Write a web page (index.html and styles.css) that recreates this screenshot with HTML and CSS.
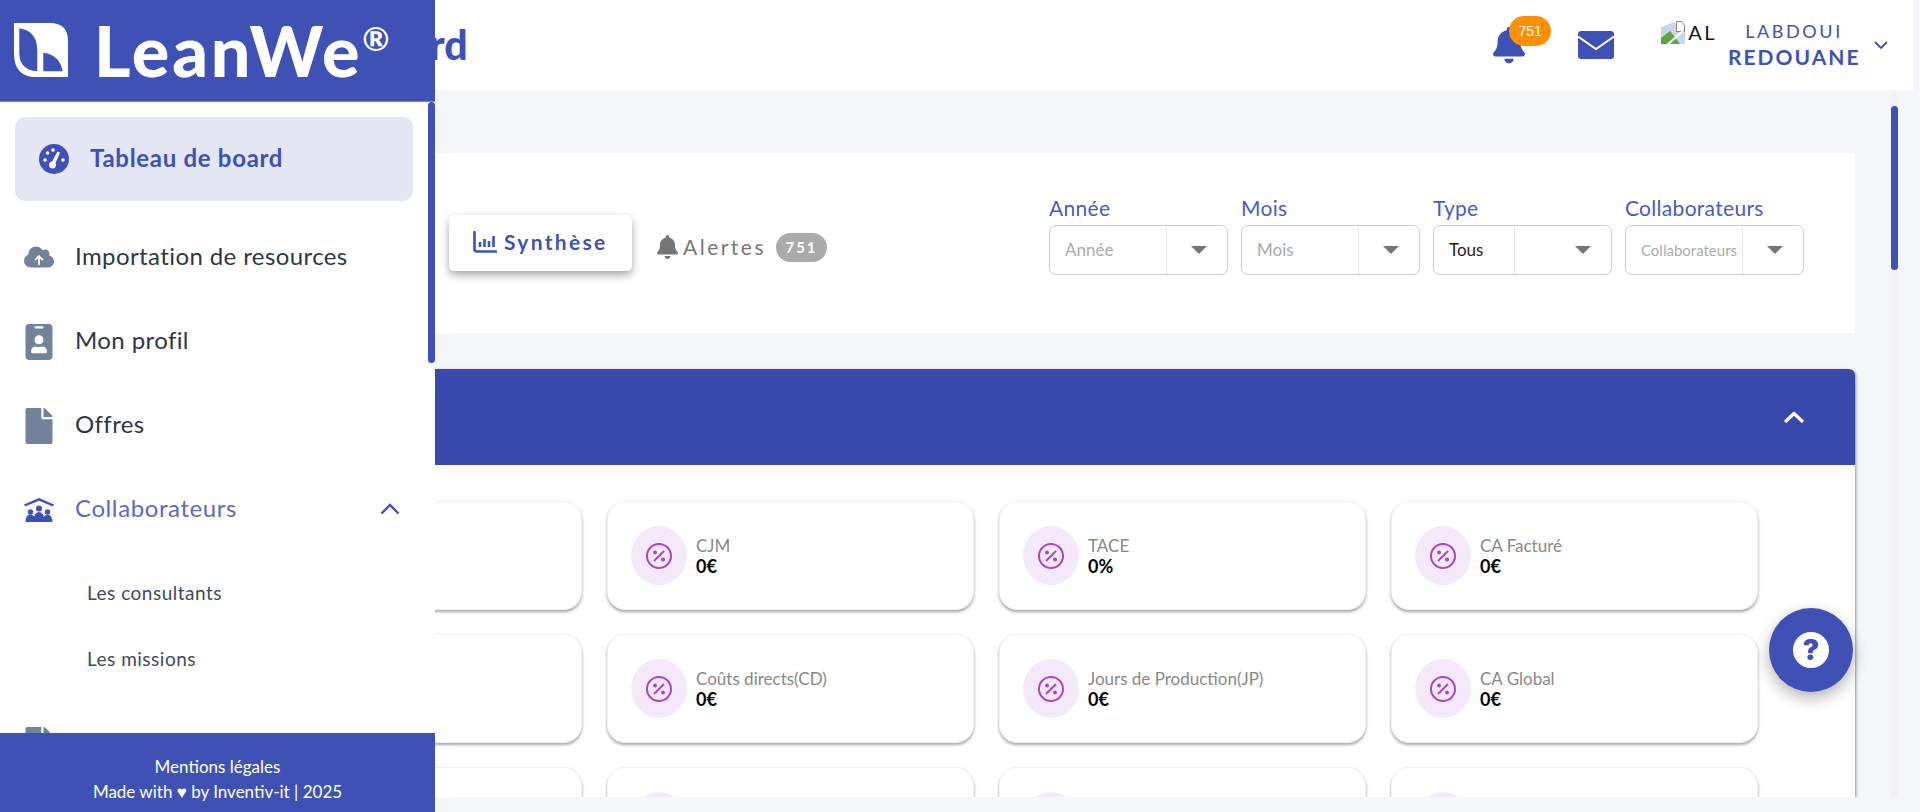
FILE: index.html
```html
<!DOCTYPE html>
<html lang="fr">
<head>
<meta charset="utf-8">
<title>LeanWe - Tableau de board</title>
<link rel="stylesheet" href="styles.css">
</head>
<body>
<div class="app">
  <aside class="sidebar">
    <div class="brand">
      <svg class="brand-mark" viewBox="0 0 54 54"><path fill="#fff" fill-rule="evenodd" d="M0 0H36Q54 0 54 18V54H22Q0 54 0 30ZM5.300 5.300V30Q5.500 47 23.300 48.300V27Q23 8 5.300 5.300ZM29.300 29.700V48.300H48.700Q46 32 29.300 29.700Z"/></svg>
      <span class="brand-name">LeanWe<sup class="brand-reg">®</sup></span>
    </div>
    <div class="nav-wrap">
      <nav class="nav">
        <a class="nav-active">
          <svg class="ico" viewBox="0 0 30 30"><circle cx="15" cy="15" r="15" fill="#3f51b5"/><g fill="#fff"><circle cx="6" cy="16" r="1.800"/><circle cx="8.500" cy="9" r="1.800"/><circle cx="14" cy="6" r="1.800"/><circle cx="24" cy="16" r="1.800"/><circle cx="13.500" cy="21" r="3.400"/><path d="M12 19.500L18.500 7.500 21 8.500 15.500 21.500Z"/></g></svg>
          <span class="nav-text">Tableau de board</span>
        </a>
        <a class="nav-item">
          <svg class="ico ico-cloud" viewBox="0 0 640 512"><path fill="#718299" d="M537.600 226.600c4.100-10.700 6.400-22.400 6.400-34.600 0-53-43-96-96-96-19.700 0-38.100 6-53.300 16.200C367 64.200 315.300 32 256 32c-88.400 0-160 71.600-160 160 0 2.700.1 5.400.2 8.100C40.200 219.800 0 273.200 0 336c0 79.500 64.500 144 144 144h368c70.700 0 128-57.300 128-128 0-61.900-44-113.600-102.400-125.400z"/><path fill="none" stroke="#fff" stroke-width="38" stroke-linecap="round" stroke-linejoin="round" d="M320 410V240M245 310l75-75 75 75"/></svg>
          <span class="nav-text">Importation de resources</span>
        </a>
        <a class="nav-item">
          <svg class="ico" viewBox="-21.300 0 426.700 512"><path fill="#718299" d="M336 0H48C21.500 0 0 21.500 0 48v416c0 26.500 21.500 48 48 48h288c26.500 0 48-21.500 48-48V48c0-26.500-21.500-48-48-48zM144 32h96c8.800 0 16 7.200 16 16s-7.200 16-16 16h-96c-8.800 0-16-7.200-16-16s7.200-16 16-16zm48 128c35.300 0 64 28.700 64 64s-28.700 64-64 64-64-28.700-64-64 28.700-64 64-64zm112 236.800c0 10.600-10 19.200-22.400 19.200H102.400C90 416 80 407.400 80 396.800v-19.200c0-31.800 30.100-57.600 67.200-57.600h5c12.300 5.100 25.700 8 39.800 8s27.600-2.900 39.800-8h5c37.100 0 67.200 25.800 67.200 57.600v19.200z"/></svg>
          <span class="nav-text">Mon profil</span>
        </a>
        <a class="nav-item">
          <svg class="ico" viewBox="-21.300 0 426.700 512"><path fill="#718299" d="M224 136V0H24C10.700 0 0 10.700 0 24v464c0 13.300 10.700 24 24 24h336c13.300 0 24-10.700 24-24V160H248c-13.200 0-24-10.800-24-24zm160-14.100v6.100H256V0h6.100c6.400 0 12.500 2.500 17 7l97.900 98c4.500 4.500 7 10.600 7 16.900z"/></svg>
          <span class="nav-text">Offres</span>
        </a>
        <a class="nav-item nav-open">
          <svg class="ico" viewBox="0 0 30 24"><g fill="#3f51b5"><path d="M15 0L30 6.500 29 8.500 15 2.800 1 8.500 0 6.500Z"/><circle cx="15" cy="10.500" r="3"/><path d="M9.500 24q0-10 5.500-10t5.500 10Z"/><circle cx="6.500" cy="14" r="2.700"/><path d="M1.500 24q0-7.500 5-7.500T11 24Z"/><circle cx="23.500" cy="14" r="2.700"/><path d="M19 24q0-7.500 4.500-7.500T28.500 24Z"/></g></svg>
          <span class="nav-text nav-grow">Collaborateurs</span>
          <svg class="nav-chevron" viewBox="0 0 20 12"><path fill="none" stroke="#3f51b5" stroke-width="2.400" d="M1.500 10.500L10 2l8.500 8.500"/></svg>
        </a>
        <div class="subnav">
          <a class="sub-item">Les consultants</a>
          <a class="sub-item">Les missions</a>
        </div>
        <a class="nav-item nav-last">
          <svg class="ico" viewBox="-21.300 0 426.700 512"><path fill="#718299" d="M224 136V0H24C10.700 0 0 10.700 0 24v464c0 13.300 10.700 24 24 24h336c13.300 0 24-10.700 24-24V160H248c-13.200 0-24-10.800-24-24zm160-14.100v6.100H256V0h6.100c6.400 0 12.500 2.500 17 7l97.900 98c4.500 4.500 7 10.600 7 16.900z"/></svg>
        </a>
      </nav>
      <div class="nav-thumb"></div>
    </div>
    <footer class="side-foot">
      <div>Mentions légales</div>
      <div>Made with ♥ by Inventiv-it | 2025</div>
    </footer>
  </aside>

  <header class="topbar">
    <h1 class="title">Tableau de board</h1>
    <div class="top-right">
      <div class="bell-wrap">
        <svg class="bell" viewBox="0 0 448 512"><path fill="#3f51b5" d="M224 0c-17.700 0-32 14.300-32 32V51.200C119 66 64 130.600 64 208v18.800c0 47-17.300 92.400-48.500 127.600l-7.400 8.300c-8.400 9.400-10.400 22.900-5.300 34.400S19.400 416 32 416H416c12.600 0 24-7.400 29.200-18.900s3.100-25-5.300-34.400l-7.400-8.300C401.300 319.200 384 273.900 384 226.800V208c0-77.400-55-142-128-156.800V32c0-17.700-14.300-32-32-32zm45.300 493.300c12-12 18.700-28.300 18.700-45.300H224 160c0 17 6.700 33.300 18.700 45.300s28.300 18.700 45.300 18.700s33.300-6.700 45.300-18.700z"/></svg>
        <span class="bell-badge">751</span>
      </div>
      <svg class="mail" viewBox="0 0 36 28"><rect width="36" height="28" rx="3" fill="#3f51b5"/><path fill="none" stroke="#fff" stroke-width="2" d="M0 5.500L18 18 36 5.500"/></svg>
      <div class="avatar">
        <svg class="broken" viewBox="0 0 24 23"><path fill="#c8d7e8" d="M0 6L14 1l1 4h9v18H0Z"/><path fill="#5fa33c" d="M0 23v-6l9-7 10 13Z"/><path fill="#fff" d="M15 0l7 0 2 5v5h-9Z"/><path fill="none" stroke="#888" d="M15.500.5h5l3 4v6h-8Z"/><path stroke="#fff" stroke-width="2" d="M6 24L22 10"/></svg>
        <span class="avatar-alt">AL</span>
      </div>
      <div class="user">
        <div class="user-last">LABDOUI</div>
        <div class="user-first">REDOUANE</div>
      </div>
      <svg class="user-chevron" viewBox="0 0 14 8"><path fill="none" stroke="#3f51b5" stroke-width="1.800" d="M1 1l6 6 6-6"/></svg>
    </div>
  </header>

  <div class="body-row">
    <main class="content">
      <section class="filters-card">
        <div class="tabs">
          <span class="tab-arrow">›</span>
          <div class="tab tab-on">
            <svg class="tab-ico" viewBox="0 0 24 22"><path fill="none" stroke="#3f51b5" stroke-width="2.600" stroke-linecap="round" d="M1.500 1v17q0 2.500 2.500 2.500h19"/><path fill="none" stroke="#3f51b5" stroke-width="2.600" d="M7 11v5M11.500 8v8M16 10v6M20.500 5v11"/></svg>
            <span class="tab-text">Synthèse</span>
          </div>
          <div class="tab-plain">
            <svg class="tab-bell" viewBox="0 0 448 512"><path fill="#757575" d="M224 0c-17.700 0-32 14.300-32 32V51.200C119 66 64 130.600 64 208v18.800c0 47-17.300 92.400-48.500 127.600l-7.400 8.300c-8.400 9.400-10.400 22.900-5.300 34.400S19.400 416 32 416H416c12.600 0 24-7.400 29.200-18.900s3.100-25-5.300-34.400l-7.400-8.300C401.300 319.200 384 273.900 384 226.800V208c0-77.400-55-142-128-156.800V32c0-17.700-14.300-32-32-32zm45.300 493.300c12-12 18.700-28.300 18.700-45.300H224 160c0 17 6.700 33.300 18.700 45.300s28.300 18.700 45.300 18.700s33.300-6.700 45.300-18.700z"/></svg>
            <span class="tab-label">Alertes</span>
            <span class="tab-count">751</span>
          </div>
        </div>
        <div class="filters">
          <div class="filter">
            <label class="f-label">Année</label>
            <div class="select"><span class="s-val ph">Année</span><span class="s-arrow"><i class="tri"></i></span></div>
          </div>
          <div class="filter">
            <label class="f-label">Mois</label>
            <div class="select"><span class="s-val ph">Mois</span><span class="s-arrow"><i class="tri"></i></span></div>
          </div>
          <div class="filter">
            <label class="f-label">Type</label>
            <div class="select"><span class="s-val s-short">Tous</span><span class="s-arrow s-wide"><i class="tri"></i></span></div>
          </div>
          <div class="filter">
            <label class="f-label">Collaborateurs</label>
            <div class="select"><span class="s-val ph s-small">Collaborateurs</span><span class="s-arrow"><i class="tri"></i></span></div>
          </div>
        </div>
      </section>

      <section class="panel">
        <div class="panel-head">
          <svg class="panel-chevron" viewBox="0 0 20 12"><path fill="none" stroke="#fff" stroke-width="3.200" stroke-linecap="round" stroke-linejoin="round" d="M2 10l8-7.500 8 7.500"/></svg>
        </div>
        <div class="grid">
          <div class="kpi"></div>
          <div class="kpi"><div class="kpi-ico"><svg viewBox="0 0 26 26"><circle cx="13" cy="13" r="12" fill="none" stroke="#ab47bc" stroke-width="2"/><path stroke="#ab47bc" stroke-width="2" d="M8 18L18 8"/><circle cx="9" cy="9.500" r="2" fill="#ab47bc"/><circle cx="17" cy="16.500" r="2" fill="#ab47bc"/></svg></div><div class="kpi-text"><div class="kpi-label">CJM</div><div class="kpi-val">0€</div></div></div>
          <div class="kpi"><div class="kpi-ico"><svg viewBox="0 0 26 26"><circle cx="13" cy="13" r="12" fill="none" stroke="#ab47bc" stroke-width="2"/><path stroke="#ab47bc" stroke-width="2" d="M8 18L18 8"/><circle cx="9" cy="9.500" r="2" fill="#ab47bc"/><circle cx="17" cy="16.500" r="2" fill="#ab47bc"/></svg></div><div class="kpi-text"><div class="kpi-label">TACE</div><div class="kpi-val">0%</div></div></div>
          <div class="kpi"><div class="kpi-ico"><svg viewBox="0 0 26 26"><circle cx="13" cy="13" r="12" fill="none" stroke="#ab47bc" stroke-width="2"/><path stroke="#ab47bc" stroke-width="2" d="M8 18L18 8"/><circle cx="9" cy="9.500" r="2" fill="#ab47bc"/><circle cx="17" cy="16.500" r="2" fill="#ab47bc"/></svg></div><div class="kpi-text"><div class="kpi-label">CA Facturé</div><div class="kpi-val">0€</div></div></div>
          <div class="kpi"></div>
          <div class="kpi"><div class="kpi-ico"><svg viewBox="0 0 26 26"><circle cx="13" cy="13" r="12" fill="none" stroke="#ab47bc" stroke-width="2"/><path stroke="#ab47bc" stroke-width="2" d="M8 18L18 8"/><circle cx="9" cy="9.500" r="2" fill="#ab47bc"/><circle cx="17" cy="16.500" r="2" fill="#ab47bc"/></svg></div><div class="kpi-text"><div class="kpi-label">Coûts directs(CD)</div><div class="kpi-val">0€</div></div></div>
          <div class="kpi"><div class="kpi-ico"><svg viewBox="0 0 26 26"><circle cx="13" cy="13" r="12" fill="none" stroke="#ab47bc" stroke-width="2"/><path stroke="#ab47bc" stroke-width="2" d="M8 18L18 8"/><circle cx="9" cy="9.500" r="2" fill="#ab47bc"/><circle cx="17" cy="16.500" r="2" fill="#ab47bc"/></svg></div><div class="kpi-text"><div class="kpi-label">Jours de Production(JP)</div><div class="kpi-val">0€</div></div></div>
          <div class="kpi"><div class="kpi-ico"><svg viewBox="0 0 26 26"><circle cx="13" cy="13" r="12" fill="none" stroke="#ab47bc" stroke-width="2"/><path stroke="#ab47bc" stroke-width="2" d="M8 18L18 8"/><circle cx="9" cy="9.500" r="2" fill="#ab47bc"/><circle cx="17" cy="16.500" r="2" fill="#ab47bc"/></svg></div><div class="kpi-text"><div class="kpi-label">CA Global</div><div class="kpi-val">0€</div></div></div>
          <div class="kpi"></div>
          <div class="kpi"><div class="kpi-ico"></div></div>
          <div class="kpi"><div class="kpi-ico"></div></div>
          <div class="kpi"><div class="kpi-ico"></div></div>
        </div>
      </section>
    </main>
    <div class="track"><div class="thumb"></div></div>
  </div>

  <button class="fab" aria-label="Aide"><span class="fab-q">?</span></button>
</div>
</body>
</html>
```
FILE: styles.css
```css
* { box-sizing: border-box; }
html, body { margin: 0; height: 100%; overflow: hidden; }
body { background: #f5f6fa; font-family: "Lato", "Noto Sans", sans-serif; color: #2d3748; }
.app { height: 812px; overflow: hidden; position: relative; }

/* sidebar */
.sidebar { position: absolute; left: 0; top: 0; width: 435px; height: 812px; background: #fff; display: flex; flex-direction: column; z-index: 5; }
.brand { height: 102px; flex: none; background: #3f51b5; border-bottom: 1px solid #6f7fe0; display: flex; align-items: flex-start; padding: 23px 0 0 14px; }
.brand-mark { width: 54px; height: 54px; flex: none; }
.brand-name { color: #fff; font-weight: 900; font-size: 70px; line-height: 54px; margin-left: 26px; letter-spacing: 2.800px; display: flex; }
.brand-reg { font-size: 33px; line-height: 30px; font-weight: 700; letter-spacing: 0; }
.nav-wrap { flex: 1; min-height: 0; position: relative; overflow: hidden; }
.nav { padding: 15px 22px 0 15px; }
.nav-thumb { position: absolute; right: 0; top: 0; width: 7px; height: 261px; background: #3f51b5; border-radius: 4px; }
.nav-active { height: 84px; display: flex; align-items: center; gap: 21px; padding-left: 24px; background: #e4e6f4; border-radius: 10px; margin-bottom: 14px; color: #3f51b5; font-size: 24px; font-weight: 700; letter-spacing: .7px; }
.nav-item { height: 84px; display: flex; align-items: center; gap: 21px; padding-left: 9px; font-size: 24px; letter-spacing: .4px; color: #2d3748; }
.nav-text { padding-bottom: 4px; }
.ico { width: 30px; height: 36px; flex: none; margin-top: 2px; }
.ico-cloud { margin-top: 0; }
.nav-active .ico { height: 30px; margin-top: 0; }
.nav-open { color: #5c6bc0; }
.nav-grow { flex: 1; letter-spacing: .6px; }
.nav-chevron { width: 20px; height: 12px; margin-right: 13px; }
.subnav { margin-top: 9px; padding-left: 72px; }
.sub-item { display: flex; align-items: center; height: 66px; padding-bottom: 2px; font-size: 19px; letter-spacing: .5px; color: #3d4a5c; }
.nav-last { margin-top: 10px; }
.side-foot { height: 79px; flex: none; background: #3f51b5; color: #fff; font-size: 17px; line-height: 25px; text-align: center; padding-top: 21px; }

/* top bar */
.topbar { height: 90px; width: 1913px; background: #fff; display: flex; align-items: center; justify-content: space-between; padding-left: 155px; padding-right: 25px; }
.title { margin: 0 0 2px; font-size: 41px; font-weight: 900; color: #3f51b5; line-height: 1; white-space: nowrap; }
.top-right { display: flex; align-items: center; }
.bell-wrap { position: relative; width: 32px; height: 38px; }
.bell { width: 32px; height: 38px; display: block; }
.bell-badge { position: absolute; left: 16px; top: -10px; width: 42px; height: 30px; border-radius: 15px; background: #ff8f00; color: #fff; font: 14px/30px "Liberation Sans", sans-serif; text-align: center; }
.mail { width: 36px; height: 28px; margin-left: 53px; }
.avatar { display: flex; align-items: center; margin-left: 47px; margin-top: -26px; }
.broken { width: 24px; height: 23px; }
.avatar-alt { margin-left: 3px; font-size: 20px; color: #111; letter-spacing: 2.500px; }
.user { width: 132px; margin-left: 11px; text-align: center; color: #3f51b5; }
.user-last { font-size: 18px; line-height: 24px; letter-spacing: 2.600px; }
.user-first { font-size: 21px; line-height: 28px; letter-spacing: 2px; font-weight: 700; }
.user-chevron { width: 14px; height: 8px; margin-left: 14px; }

/* body */
.body-row { height: 707px; width: 1898px; display: flex; }
.content { width: 1891px; padding: 63px 36px 0 180px; overflow: hidden; }
.track { width: 7px; background: #f2f2f3; }
.thumb { margin-top: 16px; height: 164px; background: #3f51b5; border-radius: 4px; }

.filters-card { height: 180px; background: #fff; display: flex; justify-content: space-between; align-items: center; padding: 0 51px 0 250px; }
.tabs { display: flex; align-items: center; }
.tab-arrow { width: 21px; font-size: 16px; color: #222; margin-left: -2px; }
.tab { display: flex; align-items: center; }
.tab-on { width: 183px; height: 56px; background: #fff; border-radius: 5px; box-shadow: 0 4px 8px rgba(0, 0, 0, .35); padding-left: 24px; gap: 7px; color: #3f51b5; font-size: 21px; font-weight: 700; letter-spacing: 2.300px; }
.tab-text { padding-bottom: 3px; }
.tab-ico { width: 24px; height: 22px; margin-bottom: 2px; }
.tab-plain { display: flex; align-items: center; margin: 8px 0 0 25px; }
.tab-bell { width: 21px; height: 24px; }
.tab-label { margin-left: 5px; font-size: 21px; padding-bottom: 2px; color: #777; letter-spacing: 2.500px; }
.tab-count { width: 51px; height: 29px; border-radius: 15px; background: #aaa; color: #fff; font-size: 15px; font-weight: 700; letter-spacing: 2px; line-height: 29px; text-align: center; margin-left: 10px; }

.filters { display: flex; gap: 13px; margin-bottom: 18px; }
.filter { width: 179px; }
.f-label { display: block; font-size: 21px; line-height: 30px; margin-bottom: 2px; color: #4a5cc0; letter-spacing: .3px; }
.select { height: 50px; border: 1px solid #ccc; border-radius: 7px; display: flex; align-items: center; }
.s-val { width: 117px; height: 100%; display: flex; align-items: center; padding-left: 15px; padding-bottom: 1px; font-size: 17px; color: #222; white-space: nowrap; border-right: 1px solid #e6e6e6; }
.s-short { width: 81px; }
.ph { color: #aaa; }
.s-small { font-size: 15px; overflow: hidden; }
.s-arrow { flex: 1; display: flex; justify-content: flex-end; padding-right: 20px; }
.tri { width: 0; height: 0; border-left: 8px solid transparent; border-right: 8px solid transparent; border-top: 8px solid #757575; }

/* panel */
.panel { margin-top: 36px; background: #fff; border-radius: 6px 6px 0 0; box-shadow: 1px 1px 3px rgba(0, 0, 0, .4); }
.panel-head { height: 96px; background: #3949ab; border-radius: 6px 6px 0 0; display: flex; align-items: center; justify-content: flex-end; padding-right: 51px; }
.panel-chevron { width: 20px; height: 12px; }
.grid { display: grid; grid-template-columns: repeat(4, 367px); grid-auto-rows: 109px; column-gap: 25px; row-gap: 24px; padding: 36px 0 0 35px; height: 332px; overflow: hidden; }
.kpi { background: #fff; border: 1px solid #f0f0f0; border-radius: 18px; box-shadow: 0 2px 3px rgba(0, 0, 0, .35); display: flex; align-items: center; padding-left: 23px; }
.kpi-ico { width: 56px; height: 59px; border-radius: 50%; background: #f5e8fa; display: flex; align-items: center; justify-content: center; flex: none; }
.kpi-ico svg { width: 26px; height: 26px; }
.kpi-text { margin-left: 9px; margin-top: 2px; }
.kpi-label { font-size: 17px; line-height: 20px; color: #888; }
.kpi-val { font-size: 18px; line-height: 21px; font-weight: 700; color: #000; }

/* help */
.fab { position: absolute; left: 1769px; top: 608px; width: 84px; height: 84px; border: 0; border-radius: 50%; background: #3f51b5; box-shadow: 0 6px 16px rgba(0, 0, 0, .3); display: flex; align-items: center; justify-content: center; padding: 0; z-index: 4; }
.fab-q { width: 36px; height: 36px; border-radius: 50%; background: #fff; color: #3f51b5; font: 900 28px/36px "Inter", sans-serif; text-align: center; }
```
